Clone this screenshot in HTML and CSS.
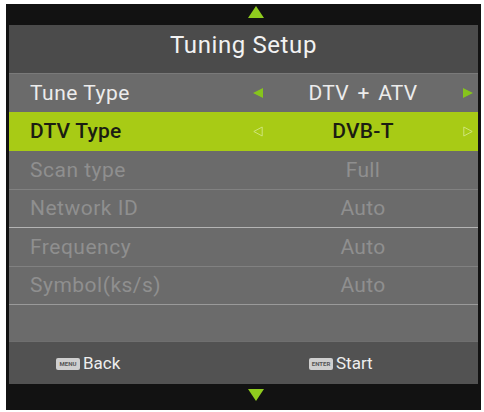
FILE: index.html
```html
<!DOCTYPE html>
<html>
<head>
<meta charset="utf-8">
<link rel="stylesheet" href="styles.css">
</head>
<body>
<div class="frame">
  <div class="band band-top">
    <svg class="tri" width="16" height="12" viewBox="0 0 16 12"><polygon points="8,0 16,12 0,12" fill="#8fcb1e"/></svg>
  </div>
  <div class="panel">
    <div class="title">Tuning Setup</div>
    <div class="row">
      <span class="label">Tune Type</span>
      <span class="arr"><svg width="10" height="10" viewBox="0 0 10 10"><polygon points="0,5 10,0 10,10" fill="#86c41c"/></svg></span>
      <span class="value">DTV + ATV</span>
      <span class="arr"><svg width="10" height="10" viewBox="0 0 10 10"><polygon points="10,5 0,0 0,10" fill="#86c41c"/></svg></span>
    </div>
    <div class="row sel">
      <span class="label">DTV Type</span>
      <span class="arr"><svg width="10" height="11" viewBox="0 0 10 11"><polygon points="0.8,5.5 9.2,1 9.2,10" fill="none" stroke="#cfe47a" stroke-width="1"/></svg></span>
      <span class="value">DVB-T</span>
      <span class="arr"><svg width="10" height="11" viewBox="0 0 10 11"><polygon points="9.2,5.5 0.8,1 0.8,10" fill="none" stroke="#cfe47a" stroke-width="1"/></svg></span>
    </div>
    <div class="row dis">
      <span class="label">Scan type</span>
      <span class="arr"></span>
      <span class="value">Full</span>
      <span class="arr"></span>
    </div>
    <div class="row dis">
      <span class="label">Network ID</span>
      <span class="arr"></span>
      <span class="value">Auto</span>
      <span class="arr"></span>
    </div>
    <div class="row dis bright">
      <span class="label">Frequency</span>
      <span class="arr"></span>
      <span class="value">Auto</span>
      <span class="arr"></span>
    </div>
    <div class="row dis">
      <span class="label">Symbol(ks/s)</span>
      <span class="arr"></span>
      <span class="value">Auto</span>
      <span class="arr"></span>
    </div>
    <div class="row empty"></div>
    <div class="footer">
      <div class="hint"><span class="key">MENU</span><span>Back</span></div>
      <div class="hint"><span class="key">ENTER</span><span>Start</span></div>
    </div>
  </div>
  <div class="band band-bottom">
    <svg class="tri" width="16" height="12" viewBox="0 0 16 12"><polygon points="0,0 16,0 8,12" fill="#8fcb1e"/></svg>
  </div>
</div>
</body>
</html>
```
FILE: styles.css
```css
html, body {
  margin: 0;
  padding: 0;
  background: #ffffff;
}
body {
  font-family: Roboto, "DejaVu Sans", sans-serif;
}
.frame {
  margin: 4px 0 0 6px;
  width: 475px;
  height: 406px;
  background: #121212;
  display: flex;
  flex-direction: column;
}
.band {
  display: flex;
  justify-content: center;
  padding-left: 25px;
}
.band-top {
  height: 21px;
  align-items: flex-start;
  padding-top: 2px;
  box-sizing: border-box;
}
.band-bottom {
  height: 26px;
  align-items: flex-start;
  padding-top: 5px;
  box-sizing: border-box;
}
.tri {
  display: block;
}
.panel {
  margin: 0 3px;
  display: flex;
  flex-direction: column;
  background: #6a6a6a;
}
.title {
  height: 48px;
  box-sizing: border-box;
  padding-bottom: 8px;
  display: flex;
  align-items: center;
  justify-content: center;
  background: #4b4b4b;
  color: #f2f2f2;
  font-size: 24px;
  letter-spacing: 0.6px;
}
.row {
  height: 38.5px;
  box-sizing: border-box;
  border-top: 1px solid #818181;
  display: grid;
  grid-template-columns: 218px 20px 190px 20px;
  align-items: center;
  padding-left: 21px;
  background: #6b6b6b;
  color: #ececec;
  font-size: 21px;
}
.row:nth-of-type(2) {
  border-top-color: #7a7a7a;
}
.label {
  letter-spacing: 0.5px;
  white-space: nowrap;
}
.arr {
  display: flex;
  justify-content: center;
  align-items: center;
}
.arr svg {
  display: block;
}
.value {
  text-align: center;
  word-spacing: 3px;
  letter-spacing: 0.3px;
}
.sel {
  background: #a8cb15;
  border-top-color: #a8cb15;
  color: #1b1d12;
  font-weight: 500;
}
.sel .label {
  letter-spacing: 0.2px;
}
.sel + .row {
  border-top-color: #a8cb15;
}
.dis {
  color: #8f8f8f;
}
.bright {
  border-top-color: #b4b4b4;
}
.empty {
  height: 37px;
  border-top-color: #9a9a9a;
}
.footer {
  height: 43px;
  box-sizing: border-box;
  border-top: 1px solid #6f6f6f;
  background: #525252;
  display: grid;
  grid-template-columns: 253px auto;
  align-items: center;
  padding-left: 47px;
  color: #eeeeee;
  font-size: 17px;
}
.hint {
  display: flex;
  align-items: center;
  gap: 3px;
}
.key {
  width: 24px;
  height: 12px;
  box-sizing: border-box;
  background: #cfcfcf;
  border-radius: 2px;
  color: #555555;
  font-size: 6px;
  font-weight: bold;
  line-height: 12px;
  text-align: center;
  letter-spacing: 0;
  overflow: hidden;
  margin-top: 2px;
}
```
